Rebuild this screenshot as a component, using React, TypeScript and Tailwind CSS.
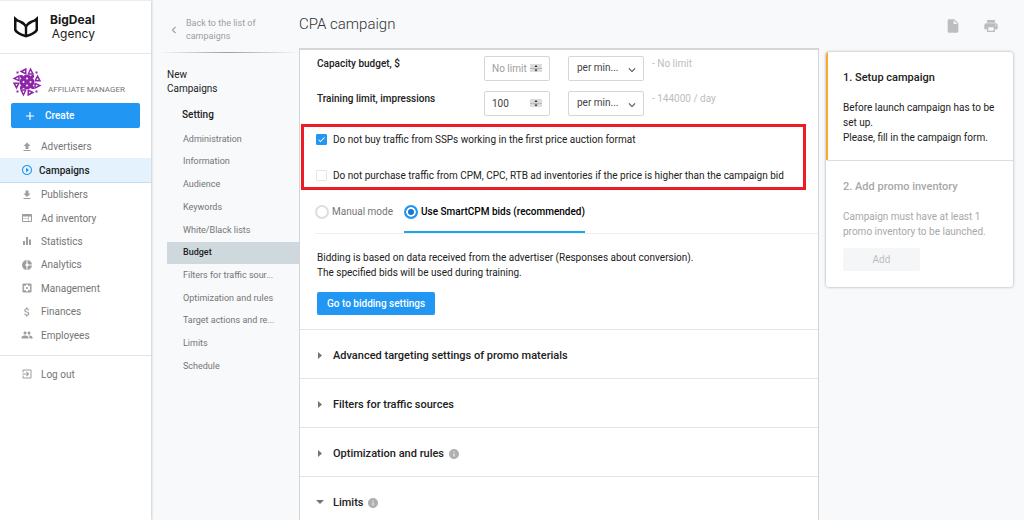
import type { ReactNode } from 'react';
import type { IconType } from 'react-icons';
import {
  MdAdd,
  MdAttachMoney,
  MdCheck,
  MdDonutSmall,
  MdEqualizer,
  MdExitToApp,
  MdInfo,
  MdInsertDriveFile,
  MdKeyboardArrowDown,
  MdKeyboardArrowLeft,
  MdPeople,
  MdPlayCircleOutline,
  MdPrint,
  MdSettingsApplications,
  MdWeb,
} from 'react-icons/md';

function UploadIcon({ className }: { className?: string }) {
  return (
    <svg viewBox="0 0 24 24" fill="currentColor" className={className}>
      <path d="M9 16h6v-6h4l-7-7-7 7h4zm-4 2h14v2H5z" />
    </svg>
  );
}

function DownloadIcon({ className }: { className?: string }) {
  return (
    <svg viewBox="0 0 24 24" fill="currentColor" className={className}>
      <path d="M19 9h-4V3H9v6H5l7 7 7-7zM5 18v2h14v-2H5z" />
    </svg>
  );
}

type MenuItem = {
  label: string;
  icon: IconType | typeof UploadIcon;
  active?: boolean;
};

const mainMenu: MenuItem[] = [
  { label: 'Advertisers', icon: UploadIcon },
  { label: 'Campaigns', icon: MdPlayCircleOutline, active: true },
  { label: 'Publishers', icon: DownloadIcon },
  { label: 'Ad inventory', icon: MdWeb },
  { label: 'Statistics', icon: MdEqualizer },
  { label: 'Analytics', icon: MdDonutSmall },
  { label: 'Management', icon: MdSettingsApplications },
  { label: 'Finances', icon: MdAttachMoney },
  { label: 'Employees', icon: MdPeople },
];

const settings = [
  'Administration',
  'Information',
  'Audience',
  'Keywords',
  'White/Black lists',
  'Budget',
  'Filters for traffic sour...',
  'Optimization and rules',
  'Target actions and re...',
  'Limits',
  'Schedule',
];

function Logo() {
  return (
    <svg viewBox="0 0 26 22" className="h-[22px] w-[26px]" fill="#111">
      <path
        fillRule="evenodd"
        d="M1 0L5 3.500Q11 5 13 8.500Q15 5 21 3.500L25 0V14.500Q23 18.500 13 21.500Q3 18.500 1 14.500zM3.500 5.500V13.500Q5.500 16.500 11.800 18.500V11Q9.500 7.500 3.500 5.500zM22.500 5.500Q16.500 7.500 14.200 11V18.500Q20.500 16.500 22.500 13.500z"
      />
    </svg>
  );
}

// one quarter of the pattern, turned four times around the centre
function Avatar() {
  return (
    <svg viewBox="0 0 32 32" className="h-8 w-8" fill="#8e24aa">
      {[0, 90, 180, 270].map((angle) => (
        <g key={angle} transform={`rotate(${angle} 16 16)`}>
          <path d="M9 9h2.200l1.300 1.300L13.800 9H16v2.200l-1.300 1.300 1.300 1.300V16h-2.200l-1.300-1.300L11.200 16H9v-2.200l1.300-1.300L9 11.200z" />
          <path fillRule="evenodd" d="M8.500 5.500L15.500 1.800v7.200zM12 5.500L14 4.400v2.200z" />
          <path fillRule="evenodd" d="M19.500 1.500L23.200 8.700h-7zM19.500 4.800L18.400 7.200h2.300z" />
          <path d="M5.500 5.500h2v2h-2z" />
        </g>
      ))}
    </svg>
  );
}

function Sidebar() {
  return (
    <aside className="z-10 flex w-[151px] shrink-0 flex-col border-t border-[#ececec] bg-white shadow-[0_0_3px_rgba(0,0,0,0.3)]">
      <div className="flex h-[53px] items-center gap-[11px] border-b border-[#dce9f2] pl-[13px]">
        <Logo />
        <div className="text-right font-['Inter',sans-serif] text-xs leading-[14px] text-[#1a1a1a]">
          <div className="font-bold">BigDeal</div>
          <div>Agency</div>
        </div>
      </div>
      <div className="flex items-end gap-[5px] pt-3 pl-[11px]">
        <Avatar />
        <span className="pb-[2px] text-[8px] leading-3 whitespace-nowrap text-[#757575]">AFFILIATE MANAGER</span>
      </div>
      <div className="px-[11px] pt-[5px]">
        <button className="flex h-[25px] w-full items-center gap-2 rounded-[2px] bg-[#2196f3] pl-3 text-[10px] font-medium text-white">
          <MdAdd className="size-[14px]" />
          Create
        </button>
      </div>
      <nav className="mt-[7px] flex h-[212px] flex-col">
        {mainMenu.map(({ label, icon: Icon, active }) => (
          <a
            key={label}
            href="#"
            className={`flex flex-1 items-center pl-[21px] text-[10px] ${
              active
                ? 'gap-[6px] border-b border-[#bbdefb] bg-[#e3f2fd] font-medium text-[#212121]'
                : 'gap-2 text-[#757575]'
            }`}
          >
            <Icon className={`size-3 ${active ? 'text-[#2196f3]' : 'text-[#9e9e9e]'}`} />
            {label}
          </a>
        ))}
      </nav>
      <div className="mt-2 border-t border-[#e0e4e8] pt-2">
        <a href="#" className="flex h-5 items-center gap-2 pl-[21px] text-[10px] text-[#757575]">
          <MdExitToApp className="size-3 text-[#9e9e9e]" />
          Log out
        </a>
      </div>
    </aside>
  );
}

function CampaignNav() {
  return (
    <div className="w-[148px] shrink-0 pl-4">
      <a href="#" className="flex h-[52px] items-center gap-[5px] pt-[7px] text-[9px] leading-[13px] text-[#9e9e9e]">
        <MdKeyboardArrowLeft className="size-[14px] shrink-0" />
        <span className="w-20">Back to the list of campaigns</span>
      </a>
      <div className="-ml-2 h-px bg-linear-to-r from-transparent via-[#9e9e9e] to-transparent" />
      <p className="mt-[15px] w-16 text-[10px] leading-[14px] text-[#212121]">New Campaigns</p>
      <p className="mt-3 pl-[15px] text-[10px] leading-[14px] font-medium text-[#212121]">Setting</p>
      <nav className="mt-[6px] flex h-[250px] flex-col">
        {settings.map((label) => (
          <a
            key={label}
            href="#"
            className={`flex flex-1 items-center pl-4 text-[9px] ${
              label === 'Budget' ? 'bg-[#cfd8dc] font-medium text-[#212121]' : 'text-[#757575]'
            }`}
          >
            {label}
          </a>
        ))}
      </nav>
    </div>
  );
}

type LimitRowProps = {
  id: string;
  label: string;
  value?: string;
  hint: string;
};

function LimitRow({ id, label, value, hint }: LimitRowProps) {
  return (
    <div className="flex text-[10px]">
      <label htmlFor={id} className="w-[167px] leading-[15px] font-medium text-[#212121]">
        {label}
      </label>
      <div className="relative mr-[18px]">
        <input
          id={id}
          type="number"
          defaultValue={value}
          placeholder="No limit"
          className="h-[25px] w-[66px] [appearance:textfield] rounded-[2px] border border-[#d6d6d6] bg-white pl-[7px] text-[#424242] placeholder:text-[#9e9e9e] [&::-webkit-inner-spin-button]:appearance-none"
        />
        <svg viewBox="0 0 12 8" className="pointer-events-none absolute top-2 right-2 h-2 w-3">
          <path fill="#dcdcdc" d="M0 0h12v8H0z" />
          <path fill="#aaa" d="M0 4h12v0.700H0z" />
          <path fill="#222" d="M6 1l1.500 2h-3zM6 7.500l-1.500-2h3z" />
        </svg>
      </div>
      <div className="relative mr-2">
        <select
          aria-label={`${label} period`}
          className="h-[25px] w-[76px] appearance-none rounded-[2px] border border-[#d6d6d6] bg-white pb-[3px] pl-2 text-[#424242]"
        >
          <option>per min...</option>
        </select>
        <MdKeyboardArrowDown className="pointer-events-none absolute top-[7px] right-[5px] size-[14px] text-[#555]" />
      </div>
      <span className="leading-[15px] text-[#bdbdbd]">{hint}</span>
    </div>
  );
}

function CheckRow({ label, checked }: { label: string; checked?: boolean }) {
  return (
    <label className="flex items-start gap-[6px] text-[10px] leading-[14px] text-[#212121]">
      <span className="relative mt-px flex">
        <input
          type="checkbox"
          defaultChecked={checked}
          className="peer size-[11px] appearance-none rounded-[1px] border border-[#e6e6e6] bg-white checked:border-[#2196f3] checked:bg-[#2196f3]"
        />
        <MdCheck className="pointer-events-none absolute inset-px hidden size-[9px] text-white peer-checked:block" />
      </span>
      {label}
    </label>
  );
}

function ModeRadio({ label, checked }: { label: string; checked?: boolean }) {
  return (
    <label
      className={`flex h-7 items-start gap-[3px] text-[10px] leading-[14px] ${
        checked ? 'border-b-2 border-[#1ba7e8] font-medium text-black' : 'text-[#757575]'
      }`}
    >
      <input
        type="radio"
        name="mode"
        defaultChecked={checked}
        className={`size-[14px] appearance-none rounded-full border-2 ${
          checked ? 'border-[#2196f3] bg-[#1976d2] shadow-[inset_0_0_0_2px_#fff]' : 'border-[#dedede] bg-white'
        }`}
      />
      {label}
    </label>
  );
}

type SectionProps = {
  title: string;
  open?: boolean;
  info?: boolean;
};

function Section({ title, open, info }: SectionProps) {
  return (
    <button className="flex h-[49px] w-full shrink-0 items-center border-t border-[#e4e4e4] pt-1 pl-4 text-left text-[11px] font-medium text-[#212121]">
      <svg viewBox="0 0 8 8" className="mr-[9px] size-2 text-[#757575]" fill="currentColor">
        {open ? <path d="M0 1h8L4 5z" /> : <path d="M2 0v7l4-3.500z" />}
      </svg>
      {title}
      {info && <MdInfo className="ml-1 size-3 text-[#b0b0b0]" />}
    </button>
  );
}

function CampaignForm() {
  return (
    <main className="flex min-h-0 flex-1 flex-col overflow-hidden border-x border-t-2 border-[#d3d6d7] bg-white">
      <div className="flex flex-col gap-[10px] pt-[6px] pl-[17px]">
        <LimitRow id="capacity" label="Capacity budget, $" hint="- No limit" />
        <LimitRow id="training" label="Training limit, impressions" value="100" hint="- 144000 / day" />
      </div>
      <div className="mt-2 mr-3 ml-px flex flex-col gap-[22px] border-[3px] border-[#ed1c24] pt-[6px] pb-1 pl-3">
        <CheckRow label="Do not buy traffic from SSPs working in the first price auction format" checked />
        <CheckRow label="Do not purchase traffic from CPM, CPC, RTB ad inventories if the price is higher than the campaign bid" />
      </div>
      <div className="mt-[15px] ml-[15px] flex gap-[11px] border-b border-[#eee]">
        <ModeRadio label="Manual mode" />
        <ModeRadio label="Use SmartCPM bids (recommended)" checked />
      </div>
      <div className="px-[17px] pt-4 pb-[14px] text-[10px] leading-[15px] text-[#212121]">
        <p>Bidding is based on data received from the advertiser (Responses about conversion).</p>
        <p>The specified bids will be used during training.</p>
        <button className="mt-3 h-[23px] rounded-[2px] bg-[#2196f3] px-[10px] font-medium text-white">
          Go to bidding settings
        </button>
      </div>
      <Section title="Advanced targeting settings of promo materials" />
      <Section title="Filters for traffic sources" />
      <Section title="Optimization and rules" info />
      <Section title="Limits" open info />
    </main>
  );
}

function Step({ title, active, children }: { title: string; active?: boolean; children: ReactNode }) {
  return (
    <section
      className={`px-[15px] text-[10px] leading-[15px] ${
        active ? 'border-l-2 border-l-[#ffa726] text-[#212121]' : 'border-t border-l-2 border-t-[#dcdcdc] border-l-transparent text-[#a8a8a8]'
      }`}
    >
      <h2 className="pt-[18px] pb-[15px] text-[11px] leading-[15px] font-medium">{title}</h2>
      {children}
    </section>
  );
}

function Steps() {
  return (
    <aside className="flex w-[205px] shrink-0 flex-col pr-[11px] pl-[7px]">
      <div className="flex h-[52px] items-center justify-end gap-[22px] pr-[14px] text-[#bdbdbd]">
        <button aria-label="Document">
          <MdInsertDriveFile className="size-4" />
        </button>
        <button aria-label="Print">
          <MdPrint className="size-4" />
        </button>
      </div>
      <div className="overflow-hidden rounded-[3px] bg-white shadow-[0_0_3px_rgba(0,0,0,0.35)]">
        <Step title="1. Setup campaign" active>
          <p>Before launch campaign has to be set up.</p>
          <p className="pb-[15px]">Please, fill in the campaign form.</p>
        </Step>
        <Step title="2. Add promo inventory">
          <p>Campaign must have at least 1 promo inventory to be launched.</p>
          <button disabled className="mt-[9px] mb-4 h-[23px] w-[77px] rounded-[2px] bg-[#f5f6f7] text-[#bdbdbd]">
            Add
          </button>
        </Step>
      </div>
    </aside>
  );
}

export default function App() {
  return (
    <div className="flex h-screen overflow-hidden bg-[#f8f9fb] font-['Roboto',sans-serif]">
      <Sidebar />
      <CampaignNav />
      <div className="flex min-w-0 flex-1 flex-col">
        <h1 className="flex h-12 shrink-0 items-center text-[15px] font-light text-[#333]">CPA campaign</h1>
        <CampaignForm />
      </div>
      <Steps />
    </div>
  );
}
